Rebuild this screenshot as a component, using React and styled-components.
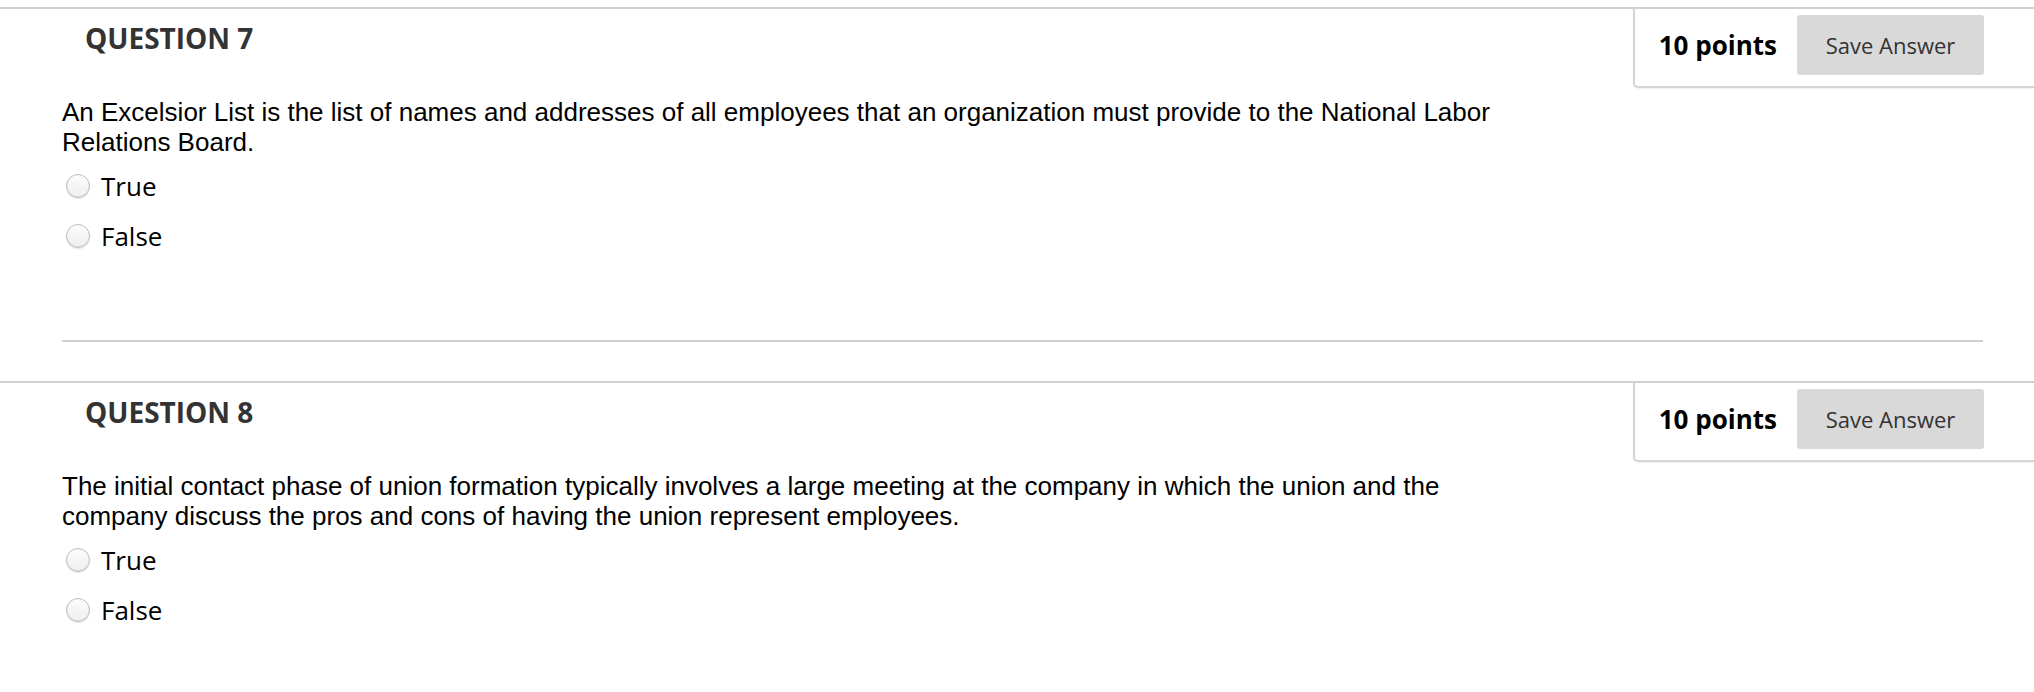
import styled, { createGlobalStyle } from "styled-components";

const GlobalStyle = createGlobalStyle`
  html, body {
    margin: 0;
    padding: 0;
    background: #fff;
  }
  body {
    padding-top: 7px;
    font-family: "Liberation Sans", Arial, sans-serif;
    overflow: hidden;
  }
`;

const questions = [
  {
    number: 7,
    points: 10,
    text: "An Excelsior List is the list of names and addresses of all employees that an organization must provide to the National Labor Relations Board.",
  },
  {
    number: 8,
    points: 10,
    text: "The initial contact phase of union formation typically involves a large meeting at the company in which the union and the company discuss the pros and cons of having the union represent employees.",
  },
];

export default function App() {
  return (
    <>
      <GlobalStyle />
      <Page>
        {questions.map((q) => (
          <Question key={q.number}>
            <Header>
              <Title>QUESTION {q.number}</Title>
              <PointsPanel>
                <Points>{q.points} points</Points>
                <SaveButton type="button">Save Answer</SaveButton>
              </PointsPanel>
            </Header>
            <Body>
              <Prompt>{q.text}</Prompt>
              <Options>
                {["True", "False"].map((label) => (
                  <Option key={label}>
                    <Radio type="radio" name={`q${q.number}`} />
                    <OptionLabel>{label}</OptionLabel>
                  </Option>
                ))}
              </Options>
              <Divider />
            </Body>
          </Question>
        ))}
      </Page>
    </>
  );
}

const Page = styled.div`
  width: 2034px;
  display: flex;
  flex-direction: column;
  gap: 39px;
`;

const Question = styled.section`
  border-top: 2px solid #d0d0d0;
  display: flex;
  flex-direction: column;
`;

const Header = styled.div`
  display: flex;
  justify-content: space-between;
  align-items: flex-start;
`;

const Title = styled.h3`
  margin: 0;
  padding: 10px 0 0 85px;
  font-family: "Open Sans", sans-serif;
  font-weight: 700;
  font-size: 28px;
  line-height: 38px;
  color: #333;
`;

const PointsPanel = styled.div`
  display: flex;
  align-items: center;
  gap: 20px;
  height: 60px;
  padding: 6px 50px 11px 24px;
  border-left: 2px solid #d4d4d4;
  border-bottom: 2px solid #d4d4d4;
  border-bottom-left-radius: 5px;
  box-shadow: 0 1px 2px rgba(0, 0, 0, 0.06);
`;

const Points = styled.span`
  font-family: "Open Sans", sans-serif;
  font-weight: 700;
  font-size: 26px;
  color: #000;
`;

const SaveButton = styled.button`
  width: 187px;
  height: 60px;
  border: none;
  border-radius: 3px;
  background: #d9d9d9;
  font-family: "Open Sans", sans-serif;
  font-size: 22px;
  color: #333;
  padding: 0;
`;

const Body = styled.div`
  display: flex;
  flex-direction: column;
  padding: 9px 50px 0 62px;
`;

const Prompt = styled.p`
  margin: 0;
  max-width: 1460px;
  font-family: "Liberation Sans", Arial, sans-serif;
  font-size: 26px;
  line-height: 30px;
  color: #000;
`;

const Options = styled.div`
  display: flex;
  flex-direction: column;
  margin-top: 4px;
`;

const Option = styled.label`
  display: flex;
  align-items: center;
  gap: 11px;
  height: 50px;
  padding-left: 4px;
`;

const Radio = styled.input`
  appearance: none;
  margin: 0;
  width: 24px;
  height: 24px;
  border-radius: 50%;
  border: 1px solid #bcbcbc;
  background: linear-gradient(#fdfdfd, #eeeeee);
  box-shadow: inset 0 -1px 1px rgba(0, 0, 0, 0.06), 0 1px 1px rgba(0, 0, 0, 0.1);
`;

const OptionLabel = styled.span`
  font-family: "Open Sans", sans-serif;
  font-size: 26px;
  color: #000;
`;

const Divider = styled.hr`
  margin: 79px 0 0 0;
  border: none;
  height: 2px;
  width: 1921px;
  background: #cfcfcf;
`;
